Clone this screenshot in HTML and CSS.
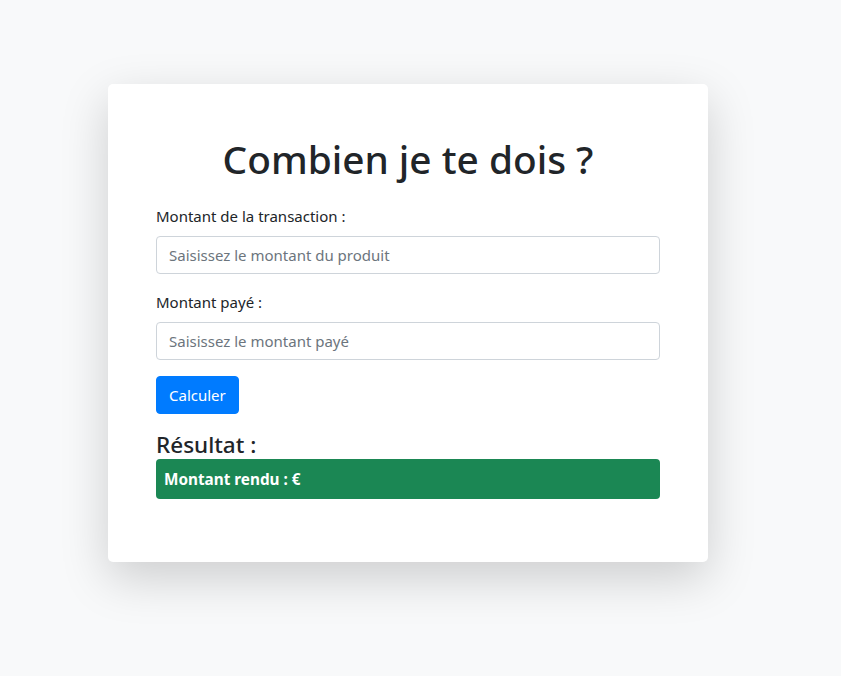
FILE: index.html
```html
<!DOCTYPE html>
<html lang="fr">
<head>
<meta charset="utf-8">
<title>Combien je te dois ?</title>
<link rel="stylesheet" href="styles.css">
</head>
<body>
<main class="page">
  <section class="card">
    <h1 class="title">Combien je te dois ?</h1>
    <div class="field">
      <label class="label" for="montant">Montant de la transaction :</label>
      <input class="input" id="montant" type="text" placeholder="Saisissez le montant du produit">
    </div>
    <div class="field">
      <label class="label" for="paye">Montant payé :</label>
      <input class="input" id="paye" type="text" placeholder="Saisissez le montant payé">
    </div>
    <button class="btn" type="button">Calculer</button>
    <h4 class="result-title">Résultat :</h4>
    <div class="alert">Montant rendu : €</div>
  </section>
</main>
</body>
</html>
```

FILE: styles.css
```css
* { box-sizing: border-box; }
html, body { margin: 0; padding: 0; }
body {
  background: #f8f9fa;
  font-family: "Noto Sans", "Open Sans", sans-serif;
  color: #212529;
  font-size: 16px;
  line-height: 1.5;
}
.page {
  display: flex;
  justify-content: center;
  padding: 84px 25px 0 0;
  min-height: 676px;
}
.card {
  width: 600px;
  height: 478px;
  background: #fff;
  border-radius: 5px;
  padding: 48px;
  box-shadow: 0 16px 48px rgba(0, 0, 0, 0.175);
  display: flex;
  flex-direction: column;
}
.title {
  margin: 0 0 21px;
  padding-top: 3px;
  text-align: center;
  font-size: 38.8px;
  font-weight: 500;
  line-height: 48px;
}
.field {
  display: flex;
  flex-direction: column;
  margin-bottom: 16px;
}
.label {
  margin-bottom: 8px;
  font-size: 15px;
  line-height: 24px;
}
.input {
  height: 38px;
  padding: 6px 12px;
  border: 1px solid #ced4da;
  border-radius: 4px;
  font: inherit;
  font-size: 15px;
  color: #495057;
}
.input::placeholder { color: #6c757d; }
.btn {
  align-self: flex-start;
  height: 38px;
  padding: 6px 12px;
  border: 1px solid #007bff;
  border-radius: 4px;
  background: #007bff;
  color: #fff;
  font: inherit;
  font-size: 15px;
  line-height: 24px;
}
.result-title {
  margin: 16px 0 0;
  font-size: 22.5px;
  font-weight: 500;
  line-height: 29px;
}
.alert {
  padding: 8px;
  background: #1b8754;
  color: #fff;
  font-weight: 700;
  border-radius: 4px;
  font-size: 15.3px;
  line-height: 24px;
}
```
